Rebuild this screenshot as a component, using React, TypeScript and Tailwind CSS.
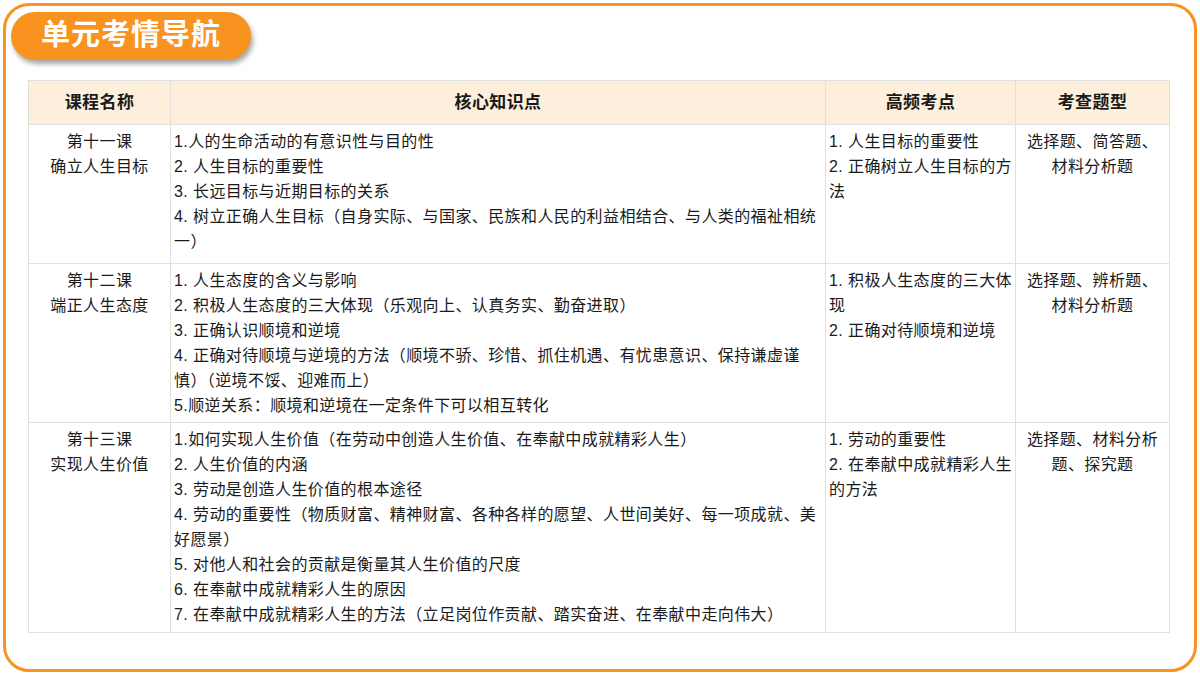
const rows = [
  {
    name: ['第十一课', '确立人生目标'],
    points: [
      '1.人的生命活动的有意识性与目的性',
      '2. 人生目标的重要性',
      '3. 长远目标与近期目标的关系',
      '4. 树立正确人生目标（自身实际、与国家、民族和人民的利益相结合、与人类的福祉相统一）',
    ],
    key: ['1. 人生目标的重要性', '2. 正确树立人生目标的方法'],
    type: '选择题、简答题、材料分析题',
    h: 'h-[139px]',
  },
  {
    name: ['第十二课', '端正人生态度'],
    points: [
      '1. 人生态度的含义与影响',
      '2. 积极人生态度的三大体现（乐观向上、认真务实、勤奋进取）',
      '3. 正确认识顺境和逆境',
      '4. 正确对待顺境与逆境的方法（顺境不骄、珍惜、抓住机遇、有忧患意识、保持谦虚谨慎）（逆境不馁、迎难而上）',
      '5.顺逆关系：顺境和逆境在一定条件下可以相互转化',
    ],
    key: ['1. 积极人生态度的三大体现', '2. 正确对待顺境和逆境'],
    type: '选择题、辨析题、材料分析题',
    h: 'h-[159px]',
  },
  {
    name: ['第十三课', '实现人生价值'],
    points: [
      '1.如何实现人生价值（在劳动中创造人生价值、在奉献中成就精彩人生）',
      '2. 人生价值的内涵',
      '3. 劳动是创造人生价值的根本途径',
      '4. 劳动的重要性（物质财富、精神财富、各种各样的愿望、人世间美好、每一项成就、美好愿景）',
      '5. 对他人和社会的贡献是衡量其人生价值的尺度',
      '6. 在奉献中成就精彩人生的原因',
      '7. 在奉献中成就精彩人生的方法（立足岗位作贡献、踏实奋进、在奉献中走向伟大）',
    ],
    key: ['1. 劳动的重要性', '2. 在奉献中成就精彩人生的方法'],
    type: '选择题、材料分析题、探究题',
    h: 'h-[210px]',
  },
];

export default function App() {
  return (
    <div
      className="w-[1200px] h-[675px] bg-white p-[3px]"
      style={{ fontFamily: '"Liberation Sans", "Noto Sans CJK SC", sans-serif' }}
    >
      <div className="h-full w-full rounded-[26px] border-[3px] border-[#f7931e] relative">
        <div className="absolute left-[5px] top-[6px] h-[48px] w-[240px] rounded-full bg-[#f7931e] shadow-[2px_4px_5px_rgba(0,0,0,0.35)] flex items-center justify-center text-white text-[29px] font-bold tracking-[1px]">
          单元考情导航
        </div>
        <table className="absolute left-[22px] top-[74px] w-[1141px] border-collapse text-[16px] leading-[25px] tracking-[0.4px] text-[#1a1a1a] table-fixed">
          <colgroup>
            <col className="w-[142px]" />
            <col className="w-[655px]" />
            <col className="w-[190px]" />
            <col className="w-[154px]" />
          </colgroup>
          <thead>
            <tr className="h-[44px] bg-[#fdefdc] font-bold text-[17px]">
              <th className="border border-[#e0e0e0]">课程名称</th>
              <th className="border border-[#e0e0e0]">核心知识点</th>
              <th className="border border-[#e0e0e0]">高频考点</th>
              <th className="border border-[#e0e0e0]">考查题型</th>
            </tr>
          </thead>
          <tbody>
            {rows.map((r, i) => (
              <tr key={i} className={r.h}>
                <td className="border border-[#e0e0e0] align-top text-center pt-[4px]">
                  {r.name.map((n) => (
                    <div key={n}>{n}</div>
                  ))}
                </td>
                <td className="border border-[#e0e0e0] align-top pt-[4px] px-[3px]">
                  {r.points.map((p) => (
                    <div key={p}>{p}</div>
                  ))}
                </td>
                <td className="border border-[#e0e0e0] align-top pt-[4px] px-[3px]">
                  {r.key.map((p) => (
                    <div key={p}>{p}</div>
                  ))}
                </td>
                <td className="border border-[#e0e0e0] align-top text-center pt-[4px] px-[5px]">
                  {r.type}
                </td>
              </tr>
            ))}
          </tbody>
        </table>
      </div>
    </div>
  );
}
